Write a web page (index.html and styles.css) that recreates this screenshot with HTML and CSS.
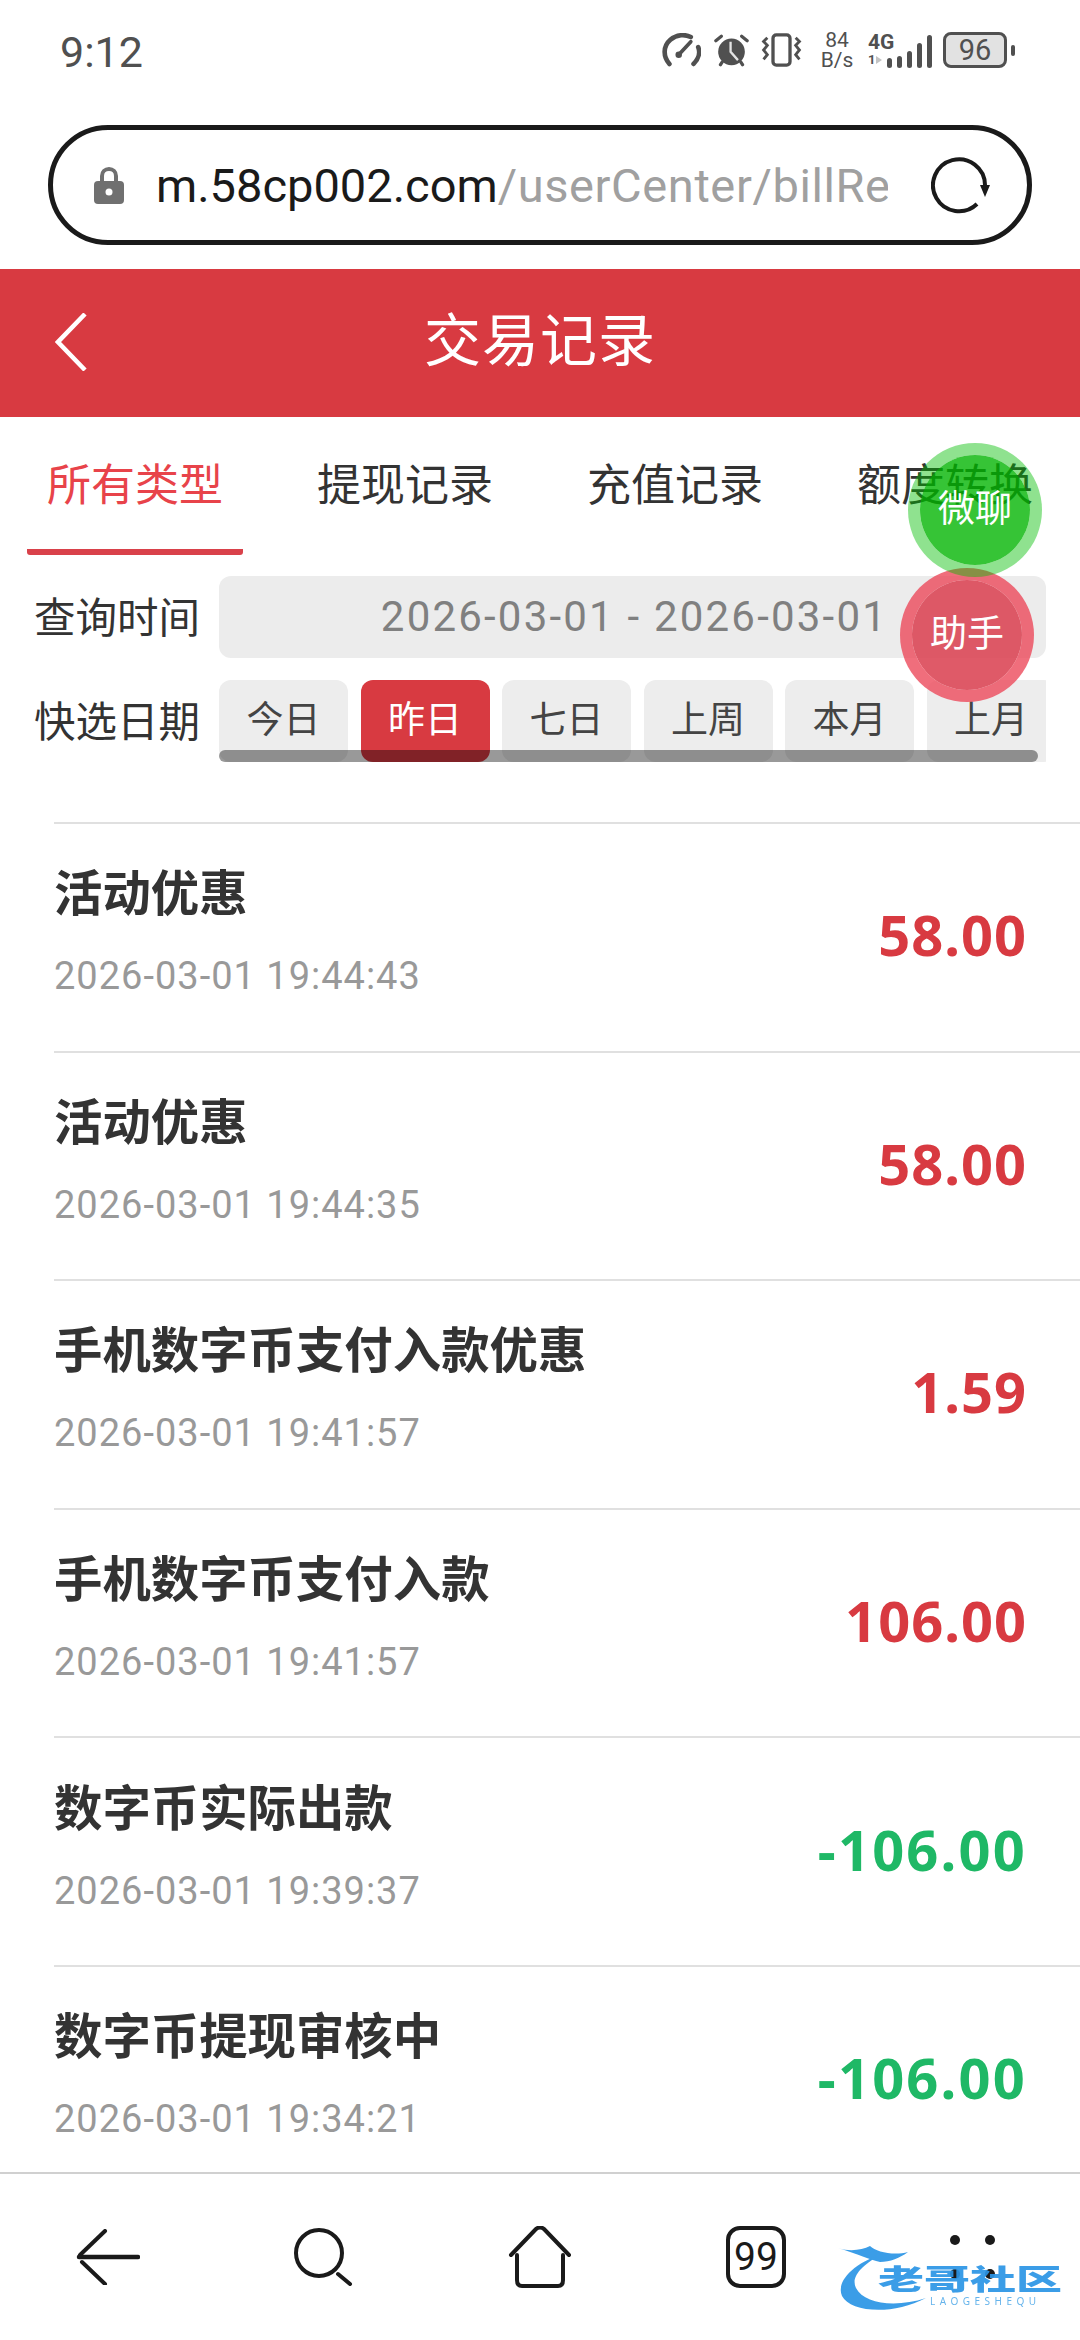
FILE: index.html
```html
<!DOCTYPE html>
<html lang="zh-CN">
<head>
    <meta charset="UTF-8">
    <title>交易记录</title>
    <link rel="stylesheet" href="styles.css">
</head>
<body>

<div class="phone">
    <div class="status-bar">
        <span class="clock">9:12</span>
        <div class="status-icons">
            <svg class="ic-speed" width="39" height="34" viewBox="0 0 42 36" fill="none" stroke="#505050" stroke-width="5" stroke-linecap="round">
                <path d="M8 33C1 25 1 14 9 7C16 1 25 1 31 4"/>
                <path d="M34 33C40 27 41 20 39 15"/>
                <path d="M19 22L31 9" stroke-width="4"/>
                <circle cx="18" cy="23" r="3.5" fill="#505050" stroke="none"/>
            </svg>
            <svg class="ic-alarm" width="35" height="34" viewBox="0 0 38 36" fill="none">
                <circle cx="19" cy="20" r="14.5" fill="#505050"/>
                <path d="M18 9V20L26 29" stroke="#e4e4e4" stroke-width="2.5"/>
                <path d="M2 8L8 3M36 8L30 3M7 34L9 31M31 34L29 31" stroke="#505050" stroke-width="3.5" stroke-linecap="round"/>
            </svg>
            <svg class="ic-vibrate" width="41" height="34" viewBox="0 0 42 36" fill="none" stroke="#505050" stroke-width="3.5">
                <rect x="12" y="2" width="18" height="32" rx="3.5"/>
                <path d="M6 5L2 9L6 13L2 18L6 23L2 28" stroke-width="3"/>
                <path d="M36 5L40 9L36 13L40 18L36 23L40 28" stroke-width="3"/>
            </svg>
            <div class="net-speed"><span>84</span><span>B/s</span></div>
            <div class="signal">
                <div class="signal-text"><span class="sig-4g">4G</span><span class="sig-1">1<i class="sig-arrow"></i></span></div>
                <div class="bars">
                    <i class="b1"></i><i class="b2"></i><i class="b3"></i><i class="b4"></i><i class="b5"></i>
                </div>
            </div>
            <div class="battery"><span class="battery-body">96</span><i class="battery-tip"></i></div>
        </div>
    </div>

    <div class="address-wrap">
        <div class="address-bar">
            <svg class="lock" width="30" height="38" viewBox="0 0 30 38">
                <path d="M8 17V10C8 6 11 3 15 3C19 3 22 6 22 10V17" fill="none" stroke="#707070" stroke-width="4"/>
                <rect x="0" y="15" width="30" height="23" rx="4" fill="#707070"/>
                <circle cx="15" cy="26" r="3.5" fill="#fff"/>
            </svg>
            <div class="url"><span class="host">m.58cp002.com</span><span class="path">/userCenter/billRe</span></div>
            <svg class="reload" width="60" height="58" viewBox="0 0 60 58" fill="none" stroke="#1a1a1a" stroke-width="4">
                <path d="M46 48A26 26 0 1 1 54 29"/>
                <path d="M49 29H59L54 41Z" fill="#1a1a1a" stroke="none"/>
            </svg>
        </div>
    </div>

    <header class="page-head">
        <svg class="back" width="32" height="58" viewBox="0 0 32 58" fill="none" stroke="#fff" stroke-width="4.5">
            <path d="M30 1L3 29L30 57"/>
        </svg>
        <h1>交易记录</h1>
    </header>

    <nav class="tabs">
        <a class="tab active">所有类型</a>
        <a class="tab">提现记录</a>
        <a class="tab">充值记录</a>
        <a class="tab">额度转换</a>
    </nav>

    <div class="filter-row">
        <label>查询时间</label>
        <div class="date-box">2026-03-01 - 2026-03-01</div>
    </div>
    <div class="filter-row quick">
        <label>快选日期</label>
        <div class="chips">
            <span class="chip">今日</span>
            <span class="chip on">昨日</span>
            <span class="chip">七日</span>
            <span class="chip">上周</span>
            <span class="chip">本月</span>
            <span class="chip">上月</span>
            <i class="scroll-thumb"></i>
        </div>
    </div>

    <div class="records">
        <div class="record">
            <div class="info"><h3>活动优惠</h3><p>2026-03-01 19:44:43</p></div>
            <div class="amount plus">58.00</div>
        </div>
        <div class="record">
            <div class="info"><h3>活动优惠</h3><p>2026-03-01 19:44:35</p></div>
            <div class="amount plus">58.00</div>
        </div>
        <div class="record">
            <div class="info"><h3>手机数字币支付入款优惠</h3><p>2026-03-01 19:41:57</p></div>
            <div class="amount plus">1.59</div>
        </div>
        <div class="record">
            <div class="info"><h3>手机数字币支付入款</h3><p>2026-03-01 19:41:57</p></div>
            <div class="amount plus">106.00</div>
        </div>
        <div class="record">
            <div class="info"><h3>数字币实际出款</h3><p>2026-03-01 19:39:37</p></div>
            <div class="amount minus">-106.00</div>
        </div>
        <div class="record">
            <div class="info"><h3>数字币提现审核中</h3><p>2026-03-01 19:34:21</p></div>
            <div class="amount minus">-106.00</div>
        </div>
    </div>

    <div class="bottom-bar">
        <svg width="64" height="56" viewBox="0 0 64 56" fill="none" stroke="#1a1a1a" stroke-width="4" stroke-linecap="round">
            <path d="M4 26L29 2"/>
            <path d="M3 28H62" stroke-width="4.5"/>
            <path d="M6 33L29 55"/>
        </svg>
        <svg width="60" height="58" viewBox="0 0 60 58" fill="none" stroke="#1a1a1a" stroke-width="4" stroke-linecap="round">
            <circle cx="25" cy="25" r="23"/>
            <path d="M44 46L56 56"/>
        </svg>
        <svg width="64" height="62" viewBox="0 0 64 62" fill="none" stroke="#1a1a1a" stroke-width="4" stroke-linecap="round" stroke-linejoin="round">
            <path d="M3 29L28 3C30 1 34 1 36 3L61 29"/>
            <path d="M9 29V54C9 58 11 60 14 60H50C53 60 55 58 55 54V29"/>
        </svg>
        <div class="tab-count">99</div>
        <div class="more"><i></i><i></i><i></i><i></i></div>
    </div>

    <div class="float-btn red">助手</div>
    <div class="float-btn green">微聊</div>
    <div class="watermark">
        <svg width="100" height="75" viewBox="0 0 100 75">
            <path d="M46 12C16 22 0 40 6 54C14 70 56 74 90 56C60 66 28 62 20 46C14 34 28 22 46 12Z" fill="#2b95e6"/>
            <path d="M2 6C14 10 26 8 34 4C40 10 58 14 72 10C64 16 54 20 44 20C34 18 22 12 2 6Z" fill="#2b95e6"/>
        </svg>
        <div class="wm-name">老哥社区</div>
        <div class="wm-sub">LAOGESHEQU</div>
    </div>
</div>

</body>
</html>
```

FILE: styles.css
```css
* {
    box-sizing: border-box;
}
html, body {
    margin: 0;
    padding: 0;
    background: #fff;
}
body {
    font-family: "Noto Sans", "Noto Sans CJK SC", sans-serif;
}
.phone {
    position: relative;
    width: 1080px;
    height: 2340px;
    overflow: hidden;
    background: #fff;
}

/* status bar */
.status-bar {
    height: 104px;
    padding: 28px 65px 0 60px;
    display: flex;
    justify-content: space-between;
    align-items: flex-start;
    color: #505050;
}
.clock {
    font-family: Roboto, sans-serif;
    font-size: 43px;
    line-height: 48px;
}
.status-icons {
    display: flex;
    align-items: center;
    height: 44px;
}
.ic-alarm {
    margin-left: 13px;
}
.ic-vibrate {
    margin-left: 12px;
}
.net-speed {
    margin-left: 19px;
    width: 32px;
    display: flex;
    flex-direction: column;
    align-items: center;
    font-family: Roboto, sans-serif;
    font-size: 21px;
    line-height: 20px;
}
.signal {
    margin-left: 15px;
    position: relative;
    width: 64px;
    height: 36px;
}
.signal-text {
    font-family: Roboto, sans-serif;
    font-weight: 700;
    display: flex;
    flex-direction: column;
    line-height: 18px;
}
.sig-4g {
    font-size: 21px;
    line-height: 20px;
}
.sig-1 {
    font-size: 13px;
    line-height: 15px;
    display: flex;
    align-items: center;
    gap: 1px;
}
.sig-arrow {
    width: 0;
    height: 0;
    border-left: 6px solid #c4c4c4;
    border-top: 4px solid transparent;
    border-bottom: 4px solid transparent;
}
.bars {
    position: absolute;
    right: 0;
    bottom: 0;
    display: flex;
    align-items: flex-end;
    gap: 5px;
}
.bars i {
    width: 5px;
    background: #505050;
    border-radius: 3px;
}
.b1 { height: 10px; }
.b2 { height: 12px; }
.b3 { height: 17px; }
.b4 { height: 25px; }
.b5 { height: 33px; }
.battery {
    margin-left: 11px;
    display: flex;
    align-items: center;
    gap: 4px;
}
.battery-body {
    width: 64px;
    height: 36px;
    border: 3px solid #505050;
    border-radius: 8px;
    background: #e2e2e2;
    font-family: Roboto, sans-serif;
    font-size: 29px;
    line-height: 30px;
    text-align: center;
}
.battery-tip {
    width: 4px;
    height: 11px;
    background: #505050;
    border-radius: 2px;
}

/* address bar */
.address-wrap {
    height: 165px;
    padding: 21px 48px 0;
}
.address-bar {
    height: 120px;
    border: 5px solid #1a1a1a;
    border-radius: 60px;
    display: flex;
    align-items: center;
    padding: 0 16px 0 41px;
}
.lock {
    flex: none;
}
.url {
    width: 732px;
    margin-left: 32px;
    overflow: hidden;
    white-space: nowrap;
    font-family: Roboto, sans-serif;
    font-size: 47px;
}
.host {
    color: #1a1a1a;
}
.path {
    color: #a0a0a0;
    letter-spacing: 0.6px;
}
.reload {
    margin-left: 43px;
}

/* page header */
.page-head {
    position: relative;
    height: 148px;
    background: #d83a41;
    display: flex;
    align-items: center;
    justify-content: center;
    padding-bottom: 14px;
    color: #fff;
}
.page-head h1 {
    margin: 0;
    font-size: 57px;
    font-weight: 400;
    letter-spacing: 1px;
}
.back {
    position: absolute;
    left: 55px;
    top: 44px;
}

/* tabs */
.tabs {
    display: flex;
    gap: 54px;
    height: 138px;
    padding-left: 27px;
    white-space: nowrap;
}
.tab {
    width: 216px;
    padding-top: 36px;
    text-align: center;
    font-size: 44px;
    line-height: 62px;
    color: #333;
}
.tab.active {
    color: #e8434a;
    border-bottom: 6px solid #d9414a;
    border-radius: 0 0 3px 3px;
}

/* filters */
.filter-row {
    display: flex;
    align-items: center;
    margin-top: 21px;
    padding-left: 34px;
    height: 82px;
}
.filter-row.quick {
    margin-top: 22px;
}
.filter-row label {
    width: 185px;
    padding-bottom: 5px;
    font-size: 41.5px;
    color: #333;
    white-space: nowrap;
}
.date-box {
    width: 827px;
    height: 82px;
    background: #ececec;
    border-radius: 12px;
    padding-right: 158px;
    text-align: right;
    font-family: Roboto, sans-serif;
    font-size: 42px;
    letter-spacing: 2.2px;
    line-height: 81px;
    color: #808080;
}
.chips {
    position: relative;
    width: 827px;
    height: 82px;
    display: flex;
    gap: 12.5px;
    overflow: hidden;
}
.chip {
    flex: none;
    width: 129px;
    height: 82px;
    background: #ededed;
    border-radius: 12px;
    text-align: center;
    font-size: 37px;
    line-height: 78px;
    color: #444;
}
.chip.on {
    background: #d83a41;
    color: #fff;
}
.scroll-thumb {
    position: absolute;
    left: 0;
    bottom: 0;
    width: 819px;
    height: 12px;
    background: rgba(0, 0, 0, 0.4);
    border-radius: 6px;
}

/* records */
.records {
    margin-top: 60px;
    margin-left: 54px;
}
.record {
    height: 228.6px;
    border-top: 2px solid #e0e0e0;
    display: flex;
    justify-content: space-between;
    align-items: center;
    padding-right: 53px;
}
.info {
    padding-bottom: 17px;
}
.info h3 {
    margin: 0;
    font-size: 48.4px;
    line-height: 66px;
    font-weight: 700;
    color: #333;
}
.info p {
    margin: 29px 0 0;
    font-family: Roboto, sans-serif;
    font-size: 38px;
    letter-spacing: 1px;
    line-height: 44px;
    color: #999;
}
.amount {
    padding-bottom: 6px;
    font-size: 56px;
    font-weight: 700;
    letter-spacing: 1px;
}
.amount.plus {
    color: #d83a41;
}
.amount.minus {
    letter-spacing: 2.2px;
    color: #1fb866;
}

/* bottom bar */
.bottom-bar {
    position: absolute;
    left: 0;
    right: 0;
    bottom: 0;
    height: 168px;
    background: #fff;
    border-top: 2px solid #d0d0d0;
    display: grid;
    grid-template-columns: 216px 216px 216px 216px 216px;
    justify-items: center;
    align-items: center;
}
.tab-count {
    width: 60px;
    height: 62px;
    border: 4px solid #1a1a1a;
    border-radius: 14px;
    font-family: Roboto, sans-serif;
    font-size: 39px;
    line-height: 54px;
    text-align: center;
    color: #1a1a1a;
}
.more {
    display: grid;
    grid-template-columns: 10px 10px;
    column-gap: 25px;
    row-gap: 24px;
}
.more i {
    width: 10px;
    height: 10px;
    background: #1a1a1a;
    border-radius: 50%;
}

/* floating buttons */
.float-btn {
    position: absolute;
    width: 134px;
    height: 134px;
    border-radius: 50%;
    background-clip: padding-box;
    text-align: center;
    font-size: 37px;
    line-height: 106px;
    color: #fff;
}
.float-btn.green {
    left: 908px;
    top: 443px;
    background-color: rgba(0, 180, 0, 0.79);
    border: 12px solid rgba(0, 190, 0, 0.44);
}
.float-btn.red {
    left: 900px;
    top: 568px;
    background-color: rgba(220, 72, 88, 0.9);
    border: 12px solid rgba(236, 74, 91, 0.8);
}

/* corner mark */
.watermark {
    position: absolute;
    left: 836px;
    top: 2240px;
    width: 230px;
    height: 72px;
    opacity: 0.92;
    filter: blur(0.6px);
}
.watermark svg {
    position: absolute;
    left: 0;
    top: 2px;
}
.wm-name {
    position: absolute;
    left: 42px;
    top: 24px;
    font-size: 46px;
    font-weight: 900;
    line-height: 48px;
    color: #2b95e6;
    white-space: nowrap;
    transform: scaleY(0.62);
    transform-origin: top left;
}
.wm-sub {
    position: absolute;
    left: 94px;
    top: 56px;
    font-size: 10px;
    line-height: 10px;
    letter-spacing: 4.5px;
    color: #5aaeea;
    white-space: nowrap;
}
```
